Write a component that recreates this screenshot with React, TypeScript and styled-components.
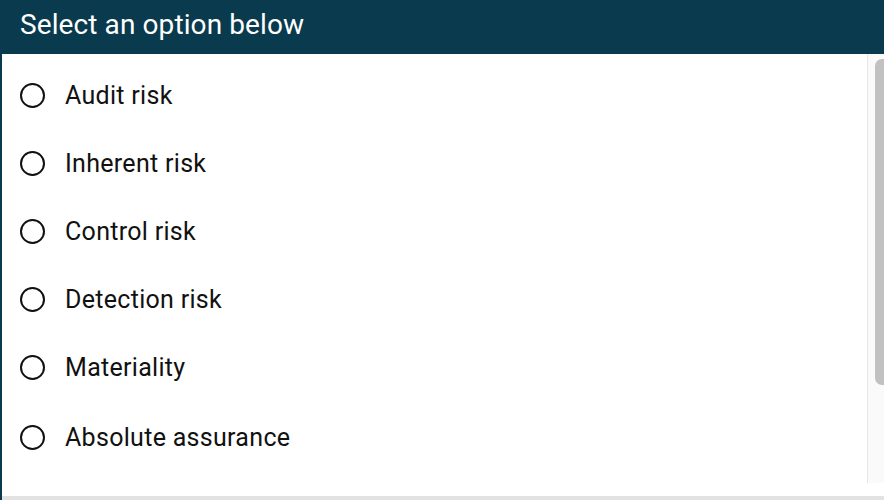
import * as React from "react";
import styled, { createGlobalStyle } from "styled-components";

const GlobalStyle = createGlobalStyle`
  html, body {
    margin: 0;
    padding: 0;
    background: #ffffff;
    font-family: Roboto, "Liberation Sans", Arial, sans-serif;
  }
`;

const options = [
  "Audit risk",
  "Inherent risk",
  "Control risk",
  "Detection risk",
  "Materiality",
  "Absolute assurance",
];

const Panel = styled.div`
  width: 884px;
  height: 500px;
  display: flex;
  flex-direction: column;
  overflow: hidden;
`;

const Header = styled.div`
  height: 54px;
  flex: none;
  background: #093a4d;
  color: #ffffff;
  font-size: 28px;
  display: flex;
  align-items: center;
  padding: 0 20px 6px;
  box-sizing: border-box;
  letter-spacing: 0.1px;
`;

const Body = styled.div`
  flex: 1;
  display: flex;
  flex-direction: column;
  border-left: 2px solid #093a4d;
`;

const Row = styled.div`
  height: 442px;
  display: flex;
`;

const List = styled.div`
  flex: 1;
  padding-top: 7px;
  display: flex;
  flex-direction: column;
`;

const Option = styled.label<{ $last?: boolean }>`
  height: ${(p) => (p.$last ? 72 : 68)}px;
  display: flex;
  align-items: center;
  gap: 20px;
  padding-left: 18px;
  font-size: 25px;
  letter-spacing: 0.3px;
  color: #111111;
  cursor: pointer;
`;

const Radio = styled.span`
  width: 25px;
  height: 25px;
  box-sizing: border-box;
  border: 2px solid #111111;
  border-radius: 50%;
  flex: none;
`;

const Track = styled.div`
  width: 17px;
  height: 429px;
  background: #fafafa;
  border-left: 1px solid #e6e6e6;
  padding: 5px 0 0 7px;
  box-sizing: border-box;
`;

const Thumb = styled.div`
  height: 326px;
  background: #c1c1c1;
  border-radius: 7px 0 0 7px;
`;

const Footer = styled.div`
  height: 4px;
  background: #e2e2e2;
`;

export default function App() {
  return (
    <>
      <GlobalStyle />
      <Panel>
        <Header>Select an option below</Header>
        <Body>
          <Row>
            <List>
              {options.map((o, i) => (
                <Option key={o} $last={i === options.length - 1}>
                  <Radio />
                  {o}
                </Option>
              ))}
            </List>
            <Track>
              <Thumb />
            </Track>
          </Row>
          <Footer />
        </Body>
      </Panel>
    </>
  );
}
